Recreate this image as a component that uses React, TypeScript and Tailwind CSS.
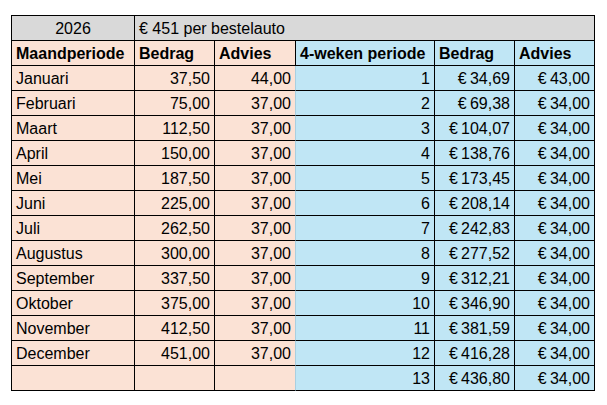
const months = [
  ["Januari", "37,50", "44,00"],
  ["Februari", "75,00", "37,00"],
  ["Maart", "112,50", "37,00"],
  ["April", "150,00", "37,00"],
  ["Mei", "187,50", "37,00"],
  ["Juni", "225,00", "37,00"],
  ["Juli", "262,50", "37,00"],
  ["Augustus", "300,00", "37,00"],
  ["September", "337,50", "37,00"],
  ["Oktober", "375,00", "37,00"],
  ["November", "412,50", "37,00"],
  ["December", "451,00", "37,00"],
  ["", "", ""],
]

const weeks = [
  ["34,69", "43,00"],
  ["69,38", "34,00"],
  ["104,07", "34,00"],
  ["138,76", "34,00"],
  ["173,45", "34,00"],
  ["208,14", "34,00"],
  ["242,83", "34,00"],
  ["277,52", "34,00"],
  ["312,21", "34,00"],
  ["346,90", "34,00"],
  ["381,59", "34,00"],
  ["416,28", "34,00"],
  ["436,80", "34,00"],
]

const cell = "h-[25px] flex items-center border-b border-r border-black px-[4px] pt-[2px] whitespace-nowrap"

export default function App() {
  return (
    <div className="w-[607px] h-[405px] bg-white pt-[15px] pl-[11px] font-['Liberation_Sans',Arial,sans-serif] text-[16px] text-black">
      <div className="grid grid-cols-[123px_80px_81px_139px_80px_80px] w-fit border-l border-t border-black">
        <div className={`${cell} justify-center bg-[#d9d9d9]`}>2026</div>
        <div className={`${cell} col-span-5 bg-[#d9d9d9]`}>€ 451 per bestelauto</div>

        <div className={`${cell} bg-[#fbe2d5] font-bold`}>Maandperiode</div>
        <div className={`${cell} bg-[#fbe2d5] font-bold`}>Bedrag</div>
        <div className={`${cell} bg-[#fbe2d5] font-bold`}>Advies</div>
        <div className={`${cell} bg-[#c0e6f5] font-bold`}>4-weken periode</div>
        <div className={`${cell} bg-[#c0e6f5] font-bold`}>Bedrag</div>
        <div className={`${cell} bg-[#c0e6f5] font-bold`}>Advies</div>

        {months.map((m, i) => (
          <div key={i} className="contents">
            <div className={`${cell} bg-[#fbe2d5]`}>{m[0]}</div>
            <div className={`${cell} justify-end bg-[#fbe2d5]`}>{m[1]}</div>
            <div className={`${cell} justify-end bg-[#fbe2d5] border-r-[#a9cfe0]`}>{m[2]}</div>
            <div className={`${cell} justify-end bg-[#c0e6f5]`}>{i + 1}</div>
            <div className={`${cell} justify-end bg-[#c0e6f5]`}>€{"\u2009"}{weeks[i][0]}</div>
            <div className={`${cell} justify-end bg-[#c0e6f5]`}>€{"\u2009"}{weeks[i][1]}</div>
          </div>
        ))}
      </div>
    </div>
  )
}
